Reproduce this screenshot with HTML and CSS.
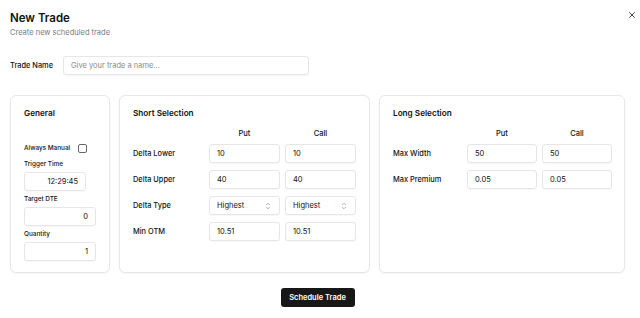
FILE: index.html
```html
<!DOCTYPE html>
<html>
<head>
<meta charset="utf-8">
<link rel="stylesheet" href="styles.css">
</head>
<body>
<div class="dialog">
  <header class="head">
    <div>
      <h1 class="title">New Trade</h1>
      <p class="subtitle">Create new scheduled trade</p>
    </div>
    <button class="close" aria-label="Close">
      <svg width="8" height="8" viewBox="0 0 8 8"><path d="M1.5 1.5L6.5 6.5M6.5 1.5L1.5 6.5" stroke="#444" stroke-width="1" stroke-linecap="round"/></svg>
    </button>
  </header>

  <div class="name-row">
    <label class="label">Trade Name</label>
    <div class="input name-input placeholder">Give your trade a name...</div>
  </div>

  <div class="cards">
    <section class="card general">
      <h2 class="card-title">General</h2>
      <div class="check-row">
        <span class="label small">Always Manual</span>
        <span class="checkbox"></span>
      </div>
      <div class="field first">
        <span class="label small">Trigger Time</span>
        <div class="input right time">12:29:45</div>
      </div>
      <div class="field">
        <span class="label small">Target DTE</span>
        <div class="input right">0</div>
      </div>
      <div class="field">
        <span class="label small">Quantity</span>
        <div class="input right">1</div>
      </div>
    </section>

    <section class="card short">
      <h2 class="card-title">Short Selection</h2>
      <div class="grid">
        <span></span><span class="col-head">Put</span><span class="col-head">Call</span>
        <span class="label">Delta Lower</span><div class="input">10</div><div class="input">10</div>
        <span class="label">Delta Upper</span><div class="input">40</div><div class="input">40</div>
        <span class="label">Delta Type</span>
        <div class="input select">Highest<svg width="6" height="8" viewBox="0 0 6 8"><path d="M1.2 3L3 1.2L4.8 3M1.2 5L3 6.8L4.8 5" fill="none" stroke="#999" stroke-width="0.8"/></svg></div>
        <div class="input select">Highest<svg width="6" height="8" viewBox="0 0 6 8"><path d="M1.2 3L3 1.2L4.8 3M1.2 5L3 6.8L4.8 5" fill="none" stroke="#999" stroke-width="0.8"/></svg></div>
        <span class="label">Min OTM</span><div class="input">10.51</div><div class="input">10.51</div>
      </div>
    </section>

    <section class="card long">
      <h2 class="card-title">Long Selection</h2>
      <div class="grid grid-long">
        <span></span><span class="col-head">Put</span><span class="col-head">Call</span>
        <span class="label">Max Width</span><div class="input">50</div><div class="input">50</div>
        <span class="label">Max Premium</span><div class="input">0.05</div><div class="input">0.05</div>
      </div>
    </section>
  </div>

  <div class="actions">
    <button class="primary">Schedule Trade</button>
  </div>
</div>
</body>
</html>
```

FILE: styles.css
```css
* { box-sizing: border-box; }
html, body { margin: 0; padding: 0; background: #fff; }
body {
  font-family: Inter, "Noto Sans", sans-serif;
  color: #111;
  width: 640px;
  height: 318px;
  overflow: hidden;
}
.dialog { padding: 11px 15px 0 10px; }
.head {
  display: flex;
  justify-content: space-between;
  align-items: flex-start;
}
.title {
  margin: 0;
  font-size: 11.5px;
  font-weight: 600;
  line-height: 14px;
}
.subtitle {
  margin: 3px 0 0;
  font-size: 7.5px;
  line-height: 10px;
  color: #7a7a7a;
}
.close {
  border: 0;
  background: none;
  padding: 0;
  margin: 0 -11px 0 0;
  width: 8px;
  height: 8px;
  display: flex;
}
.name-row {
  display: flex;
  align-items: center;
  margin-top: 18px;
}
.name-row .label { width: 53px; }
.label {
  font-size: 7.4px;
  font-weight: 500;
  color: #111;
  line-height: 10px;
  white-space: nowrap;
}
.label.small { font-size: 6.4px; }
.input {
  height: 19px;
  border: 1px solid #e6e6e6;
  border-radius: 3px;
  font-size: 7.5px;
  line-height: 17px;
  padding: 0 7px;
  color: #111;
  background: #fff;
  box-shadow: 0 1px 1px rgba(0,0,0,0.03);
}
.name-input { width: 246px; }
.placeholder { color: #8a8a8a; }
.right { text-align: right; }

.cards {
  display: flex;
  gap: 9px;
  margin-top: 20px;
}
.card {
  border: 1px solid #e7e7e7;
  border-radius: 6px;
  height: 178px;
  padding: 12px 13px 0 13px;
  box-shadow: 0 1px 2px rgba(0,0,0,0.04);
}
.general { width: 100px; }
.short { width: 251px; }
.long { width: 246px; }
.card-title {
  margin: 0;
  font-size: 8.2px;
  font-weight: 600;
  line-height: 11px;
}
.check-row {
  display: flex;
  align-items: center;
  margin-top: 24px;
  height: 10px;
}
.check-row .label { width: 54px; }
.checkbox {
  width: 9px;
  height: 9px;
  border: 1px solid #666;
  border-radius: 2px;
}
.field { display: flex; flex-direction: column; gap: 3px; margin-top: 3px; }
.field.first { margin-top: 6px; }
.time { width: 62px; }

.grid {
  display: grid;
  grid-template-columns: 71px 71px 71px;
  column-gap: 5px;
  row-gap: 7px;
  margin-top: 10px;
  align-items: center;
}
.grid-long { grid-template-columns: 69px 70px 70px; }
.col-head {
  text-align: center;
  font-size: 7.5px;
  font-weight: 500;
  line-height: 10px;
  margin-bottom: -2px;
}
.select {
  display: flex;
  justify-content: space-between;
  align-items: center;
  padding-right: 8px;
}
.actions {
  display: flex;
  justify-content: center;
  margin-top: 15px;
}
.primary {
  background: #171717;
  color: #fff;
  border: 0;
  border-radius: 3px;
  height: 19px;
  width: 74px;
  padding: 0;
  font-family: Inter, sans-serif;
  font-size: 7.5px;
  font-weight: 600;
}
```
